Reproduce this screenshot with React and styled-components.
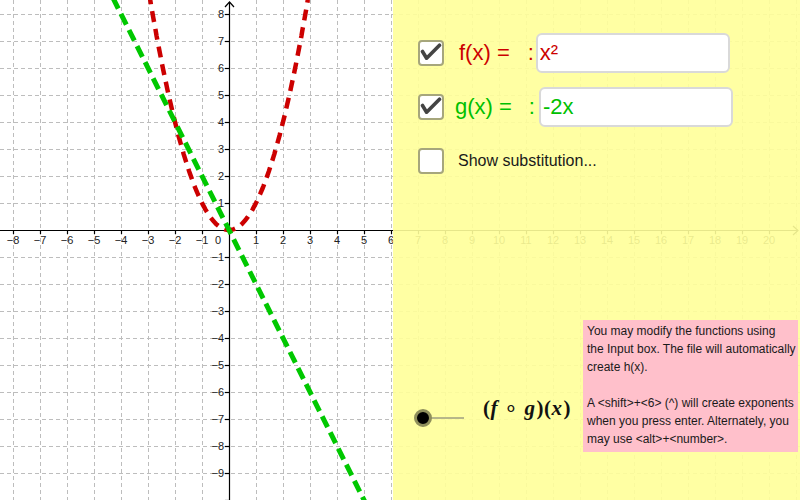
import React from 'react'
import styled, { createGlobalStyle } from 'styled-components'

const U = 27
const OX = 229
const OY = 230

const GlobalStyle = createGlobalStyle`
  body {
    margin: 0;
    font-family: "Liberation Sans", Arial, sans-serif;
  }
`

const Stage = styled.div`
  display: grid;
  width: 800px;
  height: 500px;
  overflow: hidden;
  background: #fff;
  & > * {
    grid-area: 1 / 1;
  }
`

const Graph = styled.svg`
  display: block;
  width: 800px;
  height: 500px;
  font-family: "Liberation Sans", Arial, sans-serif;
  font-size: 11px;
`

const Panel = styled.div`
  justify-self: end;
  width: 407px;
  height: 500px;
  box-sizing: border-box;
  padding: 33px 2px 48px 25px;
  background: rgba(255, 255, 153, 0.9);
  display: flex;
  flex-direction: column;
  gap: 14px;
`

const Row = styled.div`
  display: flex;
  align-items: center;
  height: 40px;
`

const Box = styled.span`
  flex: none;
  width: 26px;
  height: 26px;
  box-sizing: border-box;
  border: 2px solid #a6a67c;
  border-radius: 4px;
  background: #fff;
  display: flex;
`

const Label = styled.span`
  margin-left: ${props => props.gap || 15}px;
  font-size: 22px;
  color: ${props => props.color || "#1a1a1a"};
  white-space: nowrap;
`

const Colon = styled.span`
  margin-left: ${props => props.gap || 18}px;
  margin-right: ${props => props.after || 2}px;
`

const FnInput = styled.input`
  width: 194px;
  height: 40px;
  box-sizing: border-box;
  padding: 0 2px;
  border: 2px solid #d9d9d9;
  border-radius: 6px;
  background: #fff;
  font-family: "Liberation Sans", Arial, sans-serif;
  font-size: 22px;
  color: ${props => props.color};
  outline: none;
`

const Caption = styled.span`
  margin-left: 14px;
  font-size: 16px;
  color: #1a1a1a;
`

const BottomRow = styled.div`
  margin-top: auto;
  display: flex;
  align-items: flex-start;
`

const Slider = styled.svg`
  flex: none;
  margin: 89px 0 0 -4px;
`

const Formula = styled.div`
  margin: 76px 0 0 17px;
  font-family: "Liberation Serif", "Times New Roman", serif;
  font-size: 21px;
  line-height: 24px;
  font-weight: bold;
  color: #111;
  white-space: nowrap;
  letter-spacing: 0.5px;
  i {
    font-style: italic;
    margin-right: 1px;
  }
  span {
    font-weight: normal;
    font-size: 22px;
    margin: 0 6px 0 5px;
  }
`

const Note = styled.div`
  margin-left: auto;
  width: 215px;
  height: 132px;
  box-sizing: border-box;
  padding: 2px 0 0 4px;
  background: #ffc0cb;
  font-size: 12px;
  line-height: 18px;
  color: #1a1a1a;
  white-space: nowrap;
  p {
    margin: 0 0 18px 0;
  }
`

const Check = ({ checked }) => (
  <Box>
    {checked && (
      <svg width="22" height="22" viewBox="0 0 22 22">
        <polyline points="2.5,9.5 6.6,16.2 19.5,3.2" fill="none" stroke="#444" strokeWidth="3.6" strokeLinecap="round" strokeLinejoin="round" />
      </svg>
    )}
  </Box>
)

const num = n => (n < 0 ? '\u2212' : '') + Math.abs(n)

function CoordinatePlane() {
  let verticals = []
  for (let i = -8; i <= 21; i++) {
    if (i === 0) continue
    verticals.push(OX + i * U)
  }
  let horizontals = []
  for (let j = -10; j <= 8; j++) {
    if (j === 0) continue
    horizontals.push(OY - j * U)
  }

  let pts = []
  for (let x = -2.96; x <= 2.96; x += 0.04) {
    pts.push(`${(OX + x * U).toFixed(1)},${(OY - x * x * U).toFixed(1)}`)
  }
  const parabola = 'M' + pts.join(' L')

  let xLabels = []
  for (let i = -8; i <= 20; i++) {
    if (i === 0) continue
    xLabels.push(i)
  }
  let yLabels = []
  for (let j = -9; j <= 8; j++) {
    if (j === 0) continue
    yLabels.push(j)
  }

  return (
    <Graph viewBox="0 0 800 500">
      <g stroke="#bdbdbd" strokeWidth="1" strokeDasharray="4 3">
        {verticals.map(x => <line key={'v' + x} x1={x + 0.5} y1="0" x2={x + 0.5} y2="500" />)}
        {horizontals.map(y => <line key={'h' + y} x1="0" y1={y + 0.5} x2="800" y2={y + 0.5} />)}
      </g>
      <g stroke="#000" strokeWidth="1.2" fill="none">
        <line x1="0" y1={OY + 0.5} x2="798" y2={OY + 0.5} />
        <line x1={OX + 0.5} y1="2" x2={OX + 0.5} y2="500" />
        <polyline points="225,7 229.5,2 234,7" />
        <polyline points="793,226 798,230.5 793,235" />
        {verticals.filter(x => x < 780).map(x => <line key={'tx' + x} x1={x + 0.5} y1={OY} x2={x + 0.5} y2={OY + 4} />)}
        {horizontals.map(y => <line key={'ty' + y} x1={OX - 4} y1={y + 0.5} x2={OX} y2={y + 0.5} />)}
      </g>
      <g fill="#222" textAnchor="middle">
        {xLabels.map(i => <text key={'lx' + i} x={OX + i * U} y={OY + 14}>{num(i)}</text>)}
        <text x="218" y={OY + 14}>0</text>
      </g>
      <g fill="#222" textAnchor="end">
        {yLabels.map(j => <text key={'ly' + j} x={OX - 5} y={OY - j * U + 4}>{num(j)}</text>)}
      </g>
      <path d={parabola} fill="none" stroke="#cc0000" strokeWidth="4.5" strokeDasharray="11 7" />
      <line x1={OX - 4.3 * U} y1={OY - 8.6 * U} x2={OX + 5.1 * U} y2={OY + 10.2 * U} stroke="#00c800" strokeWidth="5" strokeDasharray="12 6" />
    </Graph>
  )
}

export default function App() {
  return (
    <Stage>
      <GlobalStyle />
      <CoordinatePlane />
      <Panel>
        <Row>
          <Check checked />
          <Label color="#cc0000" gap={15}>f(x) =<Colon gap={18} after={2}>:</Colon></Label>
          <FnInput color="#cc0000" defaultValue="x²" />
        </Row>
        <Row>
          <Check checked />
          <Label color="#00c000" gap={11}>g(x) =<Colon gap={17} after={4}>:</Colon></Label>
          <FnInput color="#00c000" defaultValue="-2x" />
        </Row>
        <Row>
          <Check />
          <Caption>Show substitution...</Caption>
        </Row>
        <BottomRow>
          <Slider width="52" height="18" viewBox="0 0 52 18">
            <line x1="9" y1="9" x2="50" y2="9" stroke="#6e6e6e" strokeWidth="1" />
            <circle cx="9" cy="9" r="7.5" fill="#000" stroke="#8f8f5c" strokeWidth="3" />
          </Slider>
          <Formula>(<i>f</i><span>∘</span><i>g</i>)(<i>x</i>)</Formula>
          <Note>
            <p>You may modify the functions using<br />the Input box. The file will automatically<br />create h(x).</p>
            <p>A &lt;shift&gt;+&lt;6&gt; (^) will create exponents<br />when you press enter. Alternately, you<br />may use &lt;alt&gt;+&lt;number&gt;.</p>
          </Note>
        </BottomRow>
      </Panel>
    </Stage>
  )
}
